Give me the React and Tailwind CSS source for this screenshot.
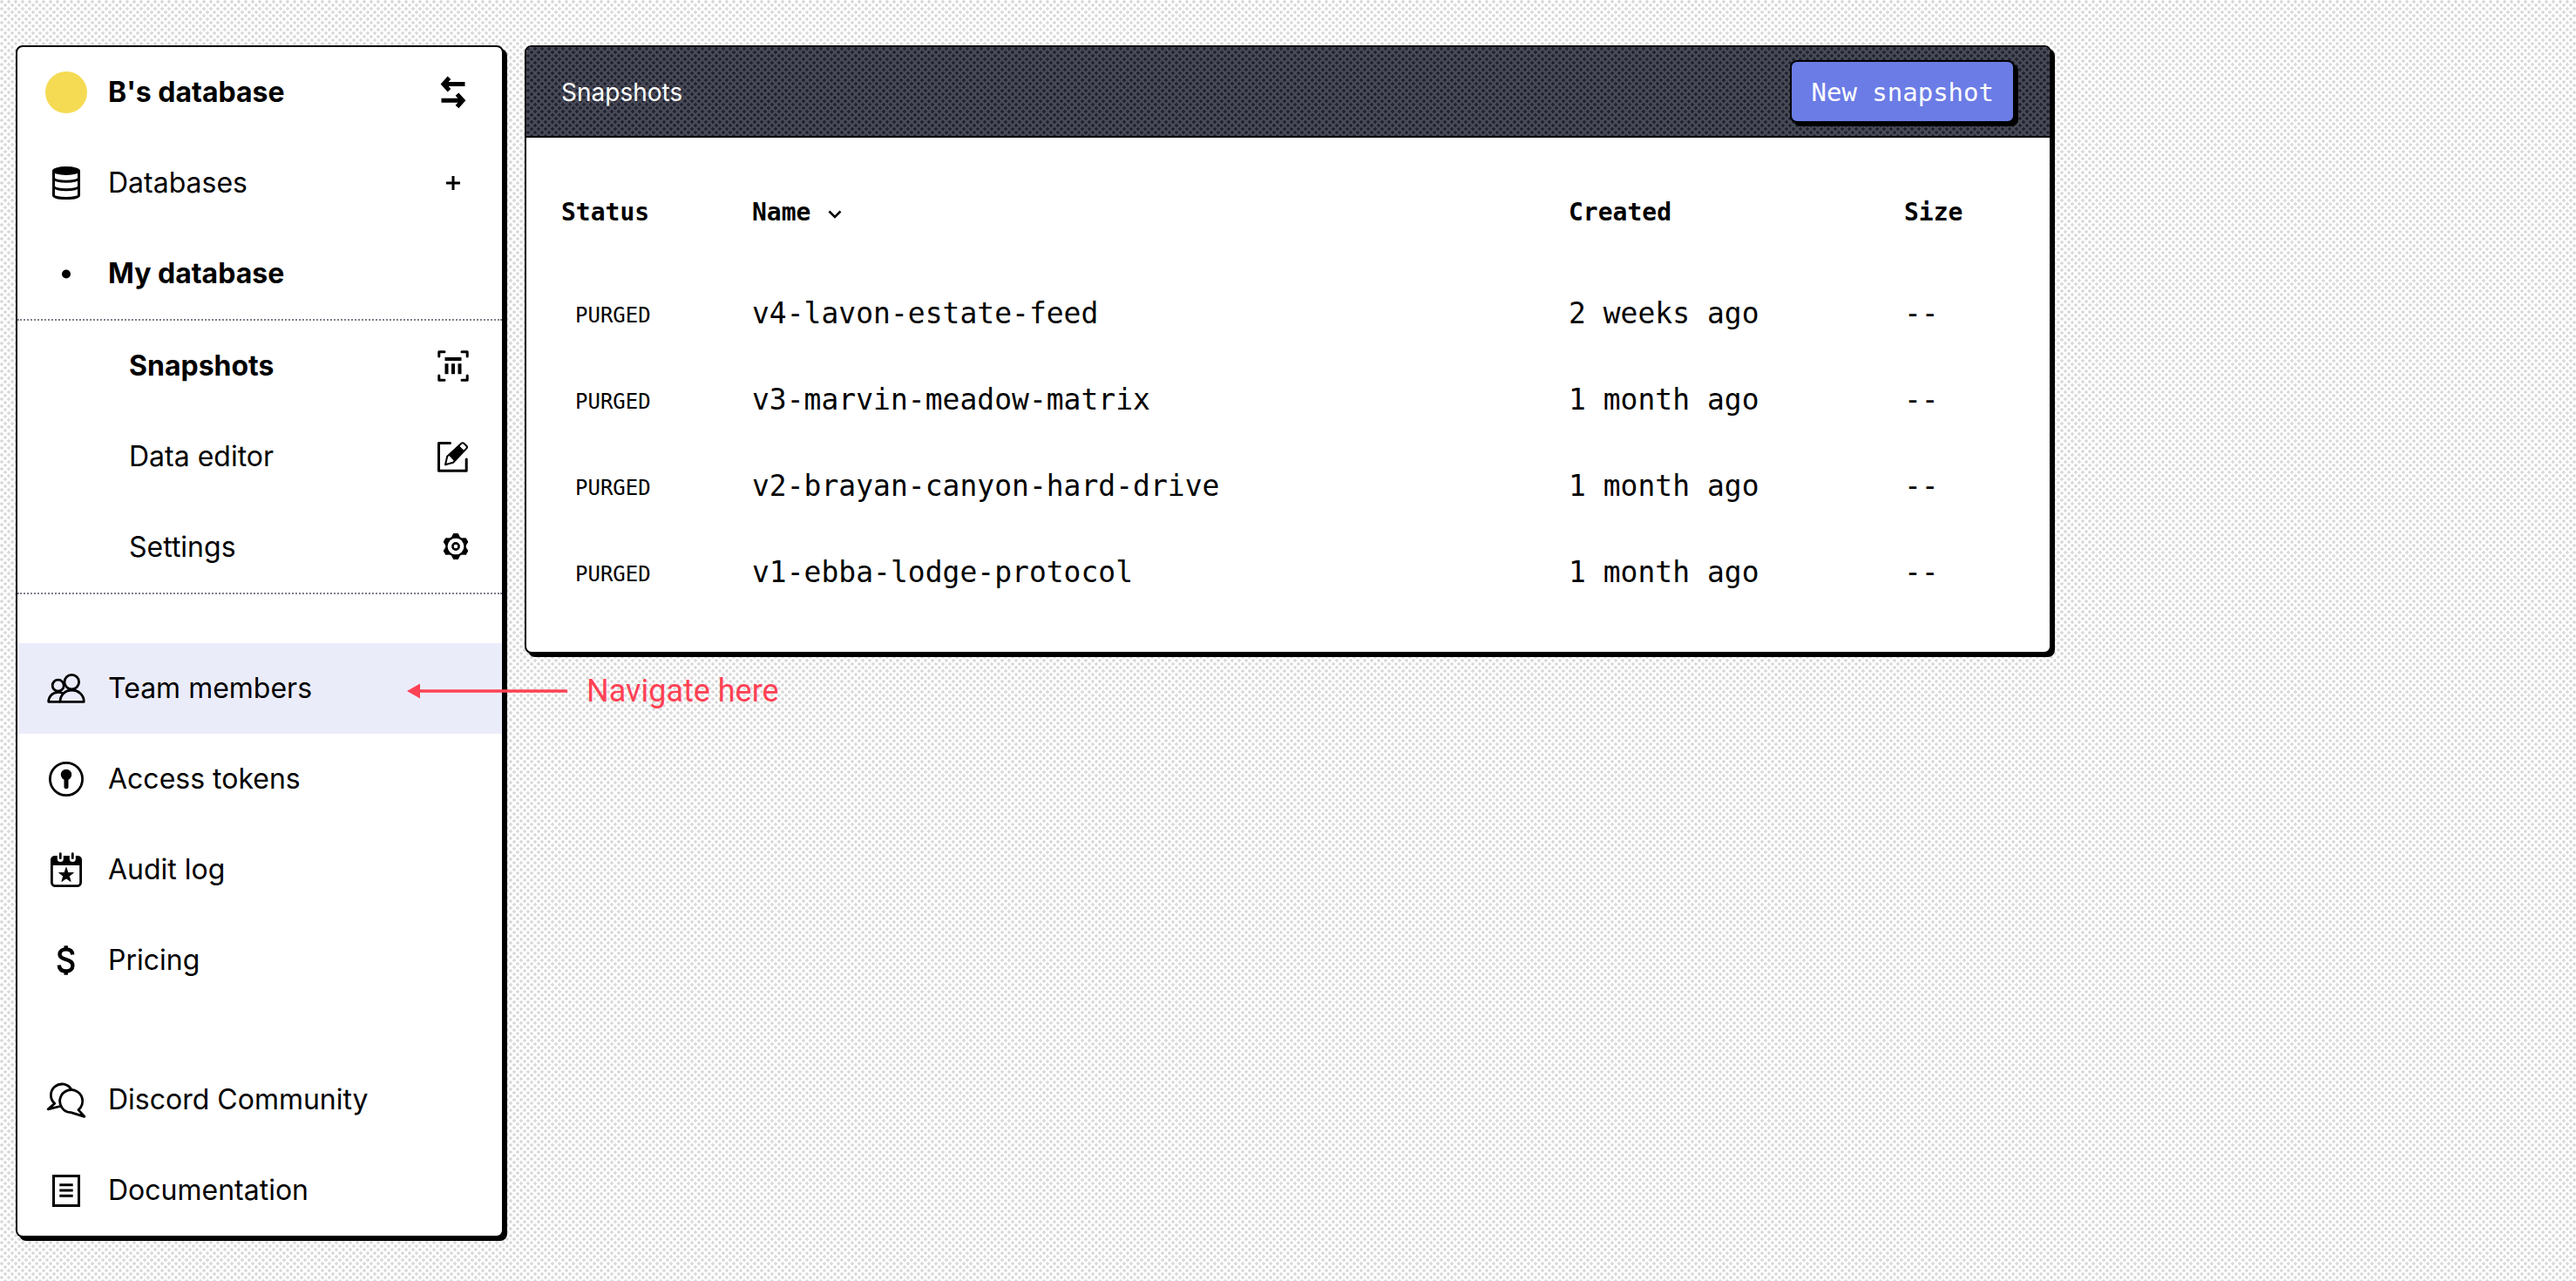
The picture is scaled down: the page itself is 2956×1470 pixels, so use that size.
const SANS = "font-[Inter,'Liberation_Sans',sans-serif]";
const MONO = "font-['DejaVu_Sans_Mono','Liberation_Mono',monospace]";

function DatabaseIcon() {
  return (
    <svg className="size-12" viewBox="0 0 48 48" fill="none" stroke="currentColor" strokeWidth="3" aria-hidden="true">
      <ellipse cx="24" cy="10" rx="16" ry="5" fill="currentColor" stroke="none" />
      <path d="M9.5 10v28c0 2 6 3.6 14.5 3.6s14.5-1.6 14.5-3.6V10" />
      <path d="M9.5 19c2 2.200 8 3.200 14.500 3.200s12.500-1 14.500-3.200M9.500 28.500c2 2.200 8 3.200 14.500 3.200s12.500-1 14.500-3.200" />
    </svg>
  );
}

function BulletIcon() {
  return (
    <svg className="size-12" viewBox="0 0 48 48" aria-hidden="true">
      <circle cx="24" cy="24.500" r="5" fill="currentColor" />
    </svg>
  );
}

function TeamIcon() {
  return (
    <svg className="size-12" viewBox="0 0 48 48" fill="none" stroke="currentColor" strokeWidth="2.800" strokeLinejoin="round" aria-hidden="true">
      <circle cx="30.300" cy="16.700" r="8.300" />
      <circle cx="14.700" cy="20.700" r="6.500" />
      <path d="M17 39.300C17 31.500 23 26 30.500 26S44.300 31.500 44.300 39.300Z" />
      <path d="M17 39.300H3.700C3.700 33 8.500 28.300 14.700 28.300c2.300 0 4.300 0.600 6 1.700" />
    </svg>
  );
}

function KeyholeIcon() {
  return (
    <svg className="size-12" viewBox="0 0 48 48" fill="none" stroke="currentColor" aria-hidden="true">
      <circle cx="24" cy="24" r="18.600" strokeWidth="2.800" />
      <circle cx="24" cy="19" r="6.200" fill="currentColor" stroke="none" />
      <path d="M24 22v10.700" strokeWidth="5" strokeLinecap="round" />
    </svg>
  );
}

function CalendarIcon() {
  return (
    <svg className="size-12" viewBox="0 0 48 48" aria-hidden="true">
      <rect x="7.400" y="9.400" width="33.200" height="33.200" rx="4" fill="none" stroke="currentColor" strokeWidth="2.800" />
      <path d="M6 19v-6a5 5 0 0 1 5-5h26a5 5 0 0 1 5 5v6z" fill="currentColor" />
      <path d="M17.300 4v7.500M31.300 4v7.500" stroke="white" strokeWidth="7" strokeLinecap="round" />
      <path d="M17.300 5.700v5M31.300 5.700v5" stroke="currentColor" strokeWidth="2.800" strokeLinecap="round" />
      <path
        d="M24 21.500l2.100 6h6.300l-5 3.900 1.800 6.200-5.200-3.600-5.200 3.600 1.800-6.200-5-3.900h6.300z"
        fill="currentColor"
        stroke="currentColor"
        strokeWidth="0.800"
        strokeLinejoin="round"
      />
    </svg>
  );
}

function DollarIcon() {
  return (
    <svg className="size-12" viewBox="0 0 48 48" fill="none" stroke="currentColor" strokeWidth="4.400" aria-hidden="true">
      <path d="M31.300 17.500C31 13.300 28 11.400 23.700 11.400c-4.500 0-7.200 2.300-7.200 5.700 0 3.800 3.200 5 7.300 6 4.500 1.100 7.600 2.500 7.600 6.800 0 4-3.200 6.600-7.700 6.600-4.700 0-7.600-2.600-8-7" />
      <path d="M23.700 7.300v5M23.700 35.700v5" />
    </svg>
  );
}

function ChatIcon() {
  return (
    <svg className="size-12" viewBox="0 0 48 48" fill="none" stroke="currentColor" strokeWidth="2.800" strokeLinejoin="round" aria-hidden="true">
      <path d="M38 35.600A13 13 0 1 0 29.500 38.600L44.800 43.300Z" />
      <path d="M30 12.500A12.600 12.600 0 1 0 10.800 28.200L3.200 34.900 17 31.500" />
    </svg>
  );
}

function DocumentIcon() {
  return (
    <svg className="size-12" viewBox="0 0 48 48" fill="none" stroke="currentColor" strokeWidth="3" aria-hidden="true">
      <rect x="9.500" y="7.500" width="29" height="34" />
      <path d="M16.300 17.700h15.400M16.300 24h15.400M16.300 30.300h15.400" />
    </svg>
  );
}

function SwapIcon() {
  return (
    <svg className="size-10" viewBox="0 0 40 40" fill="none" stroke="currentColor" strokeWidth="5" aria-hidden="true">
      <path d="M33.500 10.500H9.500M15.500 3.300L9 10.500l6.500 7.200" />
      <path d="M6.500 29.300h24M24.500 22.100l6.500 7.200-6.500 7.200" />
    </svg>
  );
}

function PlusIcon() {
  return (
    <svg className="size-10" viewBox="0 0 40 40" fill="none" stroke="currentColor" strokeWidth="3" aria-hidden="true">
      <path d="M20 12v16M12 20h16" />
    </svg>
  );
}

function SnapshotIcon() {
  return (
    <svg className="size-10" viewBox="0 0 40 40" fill="none" stroke="currentColor" strokeWidth="3" aria-hidden="true">
      <path
        d="M3.800 9V3.800H10M30 3.800h6.200V9M36.200 31v5.200H30M10 36.200H3.800V31"
        strokeLinecap="round"
        strokeLinejoin="round"
      />
      <path d="M10.500 12h19" strokeWidth="4" />
      <path d="M12.500 17.300v12M20 17.300v12M27.500 17.300v12" strokeWidth="4" />
    </svg>
  );
}

function EditIcon() {
  return (
    <svg className="size-10" viewBox="0 0 40 40" fill="none" stroke="currentColor" aria-hidden="true">
      <path d="M16.500 4.500H3.500v31.700h31.700V23" strokeWidth="3" strokeLinecap="round" strokeLinejoin="round" />
      <path d="M11 29.200l2.200-9.500L29.500 4.800c.8-.7 2-.7 2.800 0l3 3c.8.800.8 2 0 2.800L20 26.800z" strokeWidth="2" strokeLinejoin="round" />
      <path d="M15 18.500L27 7.500l6 6L21.500 25.500z" fill="currentColor" stroke="none" />
    </svg>
  );
}

function GearIcon() {
  return (
    <svg className="size-10" viewBox="0 0 40 40" fill="none" stroke="currentColor" aria-hidden="true">
      <circle cx="23" cy="19" r="10.600" strokeWidth="2.400" />
      <circle cx="23" cy="19" r="3.600" strokeWidth="2.600" />
      {[0, 60, 120, 180, 240, 300].map((angle) => (
        <path
          key={angle}
          d="M17.500 9.500L20 4.600c.2-.4.500-.6 1-.6h4c.5 0 .8.200 1 .6l2.500 4.900z"
          fill="currentColor"
          stroke="none"
          transform={`rotate(${angle} 23 19)`}
        />
      ))}
    </svg>
  );
}

function NavItem({ icon: Icon, label, active }) {
  return (
    <a href="#" className={`flex h-26 items-center gap-6 pl-8 ${active ? "bg-[#ebecfa]" : ""}`}>
      <Icon />
      {label}
    </a>
  );
}

function SubItem({ icon: Icon, label, bold }) {
  return (
    <a href="#" className={`flex h-26 items-center justify-between pl-32 pr-9 ${bold ? "font-bold" : ""}`}>
      {label}
      <Icon />
    </a>
  );
}

function Annotation() {
  return (
    <div className="absolute left-[447px] top-8 flex items-center gap-[22px] whitespace-nowrap font-[Roboto,sans-serif] text-[36px] leading-[46px] text-[#ff4154]">
      <svg className="h-5 w-46" viewBox="0 0 184 20" aria-hidden="true">
        <path d="M0 10L15 1.500v17z" fill="currentColor" />
        <path d="M14 10h170" stroke="currentColor" strokeWidth="3.500" />
      </svg>
      Navigate here
    </div>
  );
}

function Sidebar() {
  return (
    <nav
      aria-label="Main"
      className={`${SANS} w-[560px] shrink-0 rounded-lg border-2 border-black bg-white text-[32px] leading-10 shadow-[4px_4px_0_#000]`}
    >
      <button type="button" className="flex h-26 w-full items-center pl-8 pr-9 font-bold">
        <span className="mr-6 size-12 rounded-full bg-[#f5db53]" />
        <span>B's database</span>
        <span className="ml-auto">
          <SwapIcon />
        </span>
      </button>
      <div className="flex h-26 items-center justify-between pr-9">
        <NavItem icon={DatabaseIcon} label="Databases" />
        <button type="button" aria-label="Add database">
          <PlusIcon />
        </button>
      </div>
      <div className="font-bold">
        <NavItem icon={BulletIcon} label="My database" />
      </div>
      <div className="mb-14 border-y-2 border-dotted border-[#7f7f8c]">
        <SubItem icon={SnapshotIcon} label="Snapshots" bold />
        <SubItem icon={EditIcon} label="Data editor" />
        <SubItem icon={GearIcon} label="Settings" />
      </div>
      <div className="relative">
        <NavItem icon={TeamIcon} label="Team members" active />
        <Annotation />
      </div>
      <NavItem icon={KeyholeIcon} label="Access tokens" />
      <NavItem icon={CalendarIcon} label="Audit log" />
      <NavItem icon={DollarIcon} label="Pricing" />
      <div className="mt-14">
        <NavItem icon={ChatIcon} label="Discord Community" />
        <NavItem icon={DocumentIcon} label="Documentation" />
      </div>
    </nav>
  );
}

const SNAPSHOTS = [
  { name: "v4-lavon-estate-feed", created: "2 weeks ago" },
  { name: "v3-marvin-meadow-matrix", created: "1 month ago" },
  { name: "v2-brayan-canyon-hard-drive", created: "1 month ago" },
  { name: "v1-ebba-lodge-protocol", created: "1 month ago" },
];

function SnapshotsPanel() {
  return (
    <main className="max-w-[1752px] flex-1 rounded-lg border-2 border-black bg-white shadow-[4px_4px_0_#000]">
      <header className="flex h-26 items-center justify-between rounded-t-md border-b-2 border-black bg-[#484a57] bg-[radial-gradient(circle_at_2px_2px,#20222f_1.5px,transparent_2px),radial-gradient(circle_at_6px_6px,#20222f_1.5px,transparent_2px)] bg-[length:8px_8px] px-10">
        <h1 className={`${SANS} pt-0.5 text-[28px] leading-9 text-white`}>Snapshots</h1>
        <button
          type="button"
          className={`${MONO} h-18 rounded-lg border-2 border-black bg-[#6b7ce6] px-[22px] pt-0.5 text-[29px] leading-9 text-white shadow-[4px_4px_0_#000]`}
        >
          New snapshot
        </button>
      </header>
      <div className="px-10 pt-[34px] pb-[42px]">
        <table className={`${MONO} w-full table-fixed text-left text-[33px] leading-10`}>
          <colgroup>
            <col className="w-[219px]" />
            <col />
            <col className="w-[385px]" />
            <col className="w-[127px]" />
          </colgroup>
          <thead>
            <tr className="h-[118px] text-[28px]">
              <th className="pb-3.5">Status</th>
              <th className="pb-3.5">
                <button type="button" className="flex items-center gap-4 font-bold">
                  Name
                  <svg className="size-6" viewBox="0 0 24 24" fill="none" stroke="currentColor" strokeWidth="2.600" aria-hidden="true">
                    <path d="M5.500 10.500L12 17l6.500-6.500" />
                  </svg>
                </button>
              </th>
              <th className="pb-3.5">Created</th>
              <th className="pb-3.5">Size</th>
            </tr>
          </thead>
          <tbody>
            {SNAPSHOTS.map((snapshot) => (
              <tr key={snapshot.name} className="h-[99px]">
                <td className="pt-1 pl-4 text-2xl">PURGED</td>
                <td>{snapshot.name}</td>
                <td>{snapshot.created}</td>
                <td>--</td>
              </tr>
            ))}
          </tbody>
        </table>
      </div>
    </main>
  );
}

export default function App() {
  return (
    <div className="flex min-h-screen items-start gap-6 bg-white bg-[radial-gradient(circle_at_2px_2px,#dadada_1.5px,transparent_2px),radial-gradient(circle_at_6px_6px,#dadada_1.5px,transparent_2px)] bg-[length:8px_8px] pt-[52px] pb-12 pl-[18px] pr-[18px] text-black">
      <Sidebar />
      <SnapshotsPanel />
    </div>
  );
}
